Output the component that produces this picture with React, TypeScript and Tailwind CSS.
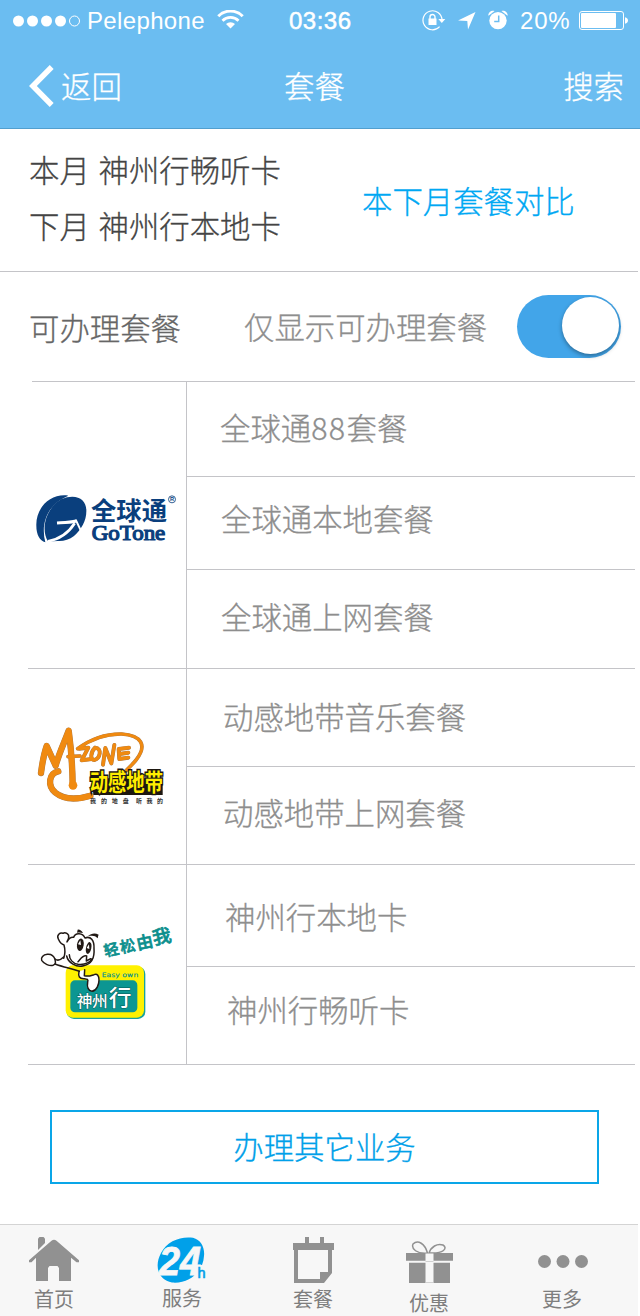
import React from "react";

const cjk = "font-['Noto_Sans_CJK_SC',sans-serif] font-light [-webkit-text-stroke:0.3px_currentColor]";
const cjkStack = "'Noto Sans CJK SC', sans-serif";

function StatusBar() {
  return (
    <div className="flex h-10 items-center pt-px pl-[13px] font-['Liberation_Sans',sans-serif] text-2xl leading-10 text-white">
      <svg width="68" height="12" viewBox="0 0 68 12" fill="#fff">
        <circle cx="5.5" cy="6" r="5.5" />
        <circle cx="19.5" cy="6" r="5.5" />
        <circle cx="33.5" cy="6" r="5.5" />
        <circle cx="47.5" cy="6" r="5.5" />
        <circle cx="61.5" cy="6" r="5" fill="none" stroke="#fff" strokeWidth="1" />
      </svg>
      <span className="ml-[6px] w-[130px] tracking-[0.35px]">Pelephone</span>
      <svg width="27" height="19" viewBox="0 0 27 19" fill="none" stroke="#fff" className="-mt-[3px]">
        <path d="M1.3 6.2a17.2 17.2 0 0 1 24.4 0" strokeWidth="3" />
        <path d="M5.5 10.7a11.3 11.3 0 0 1 16 0" strokeWidth="2.7" />
        <path d="M13.5 18.5 9 14.1a6.4 6.4 0 0 1 9 0z" fill="#fff" stroke="none" />
      </svg>
      <span className="ml-[45px] w-[133px] tracking-[0.5px] [-webkit-text-stroke:0.5px_#fff]">03:36</span>
      <svg width="24" height="22" viewBox="0 0 24 22" fill="none" stroke="#fff" className="-mt-[2px]">
        <path d="M17.6 17.6A9.5 9.5 0 1 1 20 11" strokeWidth="1.2" />
        <path d="M16.3 10h7l-3.5 4z" fill="#fff" stroke="none" />
        <path d="M6.5 9.5h8V16h-8z" fill="#fff" stroke="none" />
        <path d="M8 10V8a2.5 2.5 0 0 1 5 0v2" strokeWidth="1.4" />
      </svg>
      <svg width="18" height="18" viewBox="0 0 18 18" fill="#fff" className="ml-[12px]">
        <path d="M0 8.5 17.5 0 10 17.5 9.3 8.9z" />
      </svg>
      <svg width="20" height="20" viewBox="0 0 20 20" fill="#fff" className="ml-[12px] -mt-[2px]">
        <circle cx="10" cy="10.6" r="8.7" />
        <path d="M.5 5.8C-.5 2.8 3.5-.5 6.6 1zM19.5 5.8C20.5 2.8 16.5-.5 13.4 1z" />
        <path d="M10.7 5.5v6H6.2" fill="none" stroke="#6bbdf1" strokeWidth="1.5" />
      </svg>
      <span className="ml-[12px] w-[59px] tracking-[0.8px]">20%</span>
      <svg width="50" height="20" viewBox="0 0 50 20">
        <rect x=".5" y=".5" width="44" height="18" rx="2.5" fill="none" stroke="#fff" />
        <rect x="2" y="2" width="35" height="15" rx="1" fill="#fff" />
        <path d="M46 6.2c4 .8 4 5.8 0 6.6z" fill="#fff" />
      </svg>
    </div>
  );
}

function NavBar() {
  return (
    <div className={`${cjk} grid h-[88px] grid-cols-[284px_1fr_auto] pr-[16px] text-[30.4px] leading-[90px] text-white`}>
      <div className="flex pl-[29px]">
        <svg width="26" height="42" viewBox="0 0 26 42" fill="none" stroke="#fff" strokeWidth="5.5" className="mt-[25px]">
          <path d="M22.7 2 3.9 21l18.8 19" />
        </svg>
        <span className="ml-[6px]">返回</span>
      </div>
      <span>套餐</span>
      <span>搜索</span>
    </div>
  );
}

function GoToneLogo() {
  return (
    <svg width="158" height="80" viewBox="24 0 474 240" className="mt-[98px]">
      <path d="M145 47C95 39 47 80 49 137c0 27 10 44 27 50-14-53 3-112 69-140z" fill="#0a3f7d" />
      <path d="M84 184C60 145 80 84 123 58c44-18 75-2 76 32 1 32-14 57-37 78-14 11-32 16-48 15-10 0-20 1-30 1z" fill="#0a3f7d" />
      <g fill="none" stroke="#fff">
        <path d="M84 184C118 178 146 158 164 130" strokeWidth="8" />
        <path d="M111 129c18-1 38-1 58-6" strokeWidth="9" />
        <path d="M167 119l17 36" strokeWidth="6" />
      </g>
      <text x="213" y="120" fill="#0a3f7d" fontFamily={cjkStack} fontWeight="700" fontSize="76" textLength="228" lengthAdjust="spacingAndGlyphs">全球通</text>
      <text x="215" y="179" fill="#0a3f7d" stroke="#0a3f7d" strokeWidth="3.5" fontFamily="'Liberation Serif', serif" fontSize="62" textLength="221" lengthAdjust="spacingAndGlyphs">GoTone</text>
      <circle cx="456" cy="58" r="10.5" fill="none" stroke="#0a3f7d" strokeWidth="2.5" />
      <text x="450" y="64" fill="#0a3f7d" fontFamily="'Liberation Sans', sans-serif" fontWeight="700" fontSize="17">R</text>
    </svg>
  );
}

const mzoneStrokes = [
  { d: "M63 174c4-32 8-55 17-81l27 59c10-37 26-70 39-105 4 30 11 75 12 165", width: 17 },
  { d: "M144 125l36-2", width: 9 },
  { d: "M178 101l27-3-20 38 30-4", width: 10 },
  { d: "M225 98c-15 16-14 37-2 37 17-5 25-35 2-37", width: 10 },
  { d: "M249 149l7-50 18 46 9-55", width: 10 },
  { d: "M327 98l-31 4 2 30 27-4M299 117l26-4", width: 10 },
  { d: "M173 101C214 71 257 56 305 57c60 4 77 34 44 77-8 11-19 20-31 33", width: 9 },
  { d: "M115 169c-28 6-34 42-9 64 27 22 62 22 105 9", width: 17 },
];

function MZoneLogo() {
  return (
    <svg width="158" height="100" viewBox="24 0 474 300" className="mt-[46px]">
      <g fill="none" strokeLinecap="round" strokeLinejoin="round">
        {[
          { color: "#a8784a", extra: 2 },
          { color: "#f08a10", extra: 0 },
        ].map(({ color, extra }) => (
          <g key={color} stroke={color}>
            {mzoneStrokes.map(({ d, width }) => (
              <path key={d} d={d} strokeWidth={width + extra} />
            ))}
          </g>
        ))}
      </g>
      <circle cx="159" cy="211" r="13" fill="#f08a10" />
      <path d="M216 190h212v50H220z" fill="#1d1710" />
      <text x="209" y="229" fill="#ffed00" stroke="#1d1710" strokeWidth="9" paintOrder="stroke" fontFamily={cjkStack} fontWeight="700" fontSize="70" textLength="220" lengthAdjust="spacingAndGlyphs">动感地带</text>
      <g fill="#333" fontFamily={cjkStack} fontWeight="700" fontSize="18">
        <text x="210" y="265" textLength="116">我的地盘</text>
        <text x="348" y="265" textLength="81">听我的</text>
      </g>
    </svg>
  );
}

function EasyOwnLogo() {
  return (
    <svg width="158" height="120" viewBox="24 0 474 360" className="mt-[45px]">
      <rect x="140" y="170" width="236" height="157" rx="22" fill="#18a29b" />
      <rect x="137" y="166" width="235" height="157" rx="22" fill="#fff100" />
      <rect x="151" y="211" width="201" height="96" rx="14" fill="#0c9692" />
      <text x="245" y="201" fill="#13958a" fontFamily="'DejaVu Sans', sans-serif" fontSize="18" stroke="#13958a" strokeWidth=".9" textLength="110" lengthAdjust="spacingAndGlyphs">Easy own</text>
      <g fontFamily={cjkStack} fontWeight="500" fill="#fff" stroke="#075e5b" strokeWidth="3" paintOrder="stroke">
        <text x="170" y="291" fontSize="47" textLength="93">神州</text>
        <text x="266" y="288" fontSize="68">行</text>
      </g>
      <g fill="#0c8f8d" stroke="#0c8f8d" strokeWidth="2" fontFamily={cjkStack} fontWeight="500">
        <text transform="translate(256 140) rotate(-13)" fontSize="45">轻</text>
        <text transform="translate(304 130) rotate(-12)" fontSize="46">松</text>
        <text transform="translate(353 119) rotate(-12)" fontSize="50">由</text>
        <text transform="translate(402 105) rotate(-12)" fontSize="56">我</text>
      </g>
      <g fill="#fff" stroke="#211915" strokeWidth="4.5" strokeLinecap="round" strokeLinejoin="round">
        <path d="M177 184c-3 15 1 23 16 22 8 1 13 2 10 10-3 15 2 27 13 28 14-2 21-21 21-34 0-13-5-20-15-16-10 3-16 7-29 3l1-18" />
        <path d="M131 145c5-14 5-26 1-40-9-3-14-11-17-18-6-12 5-20 14-17 6-5 19 1 17 12 0 8-5 10-5 14C147 84 155 81 161 82c5-15 27-14 34 2 17-7 28 7 27 31 2 26-7 47-31 52-22 6-47-9-51-29" />
        <path d="M105 148c-3-9-12-16-23-15-13 1-20 10-17 18 7 11 24 18 34 15 9-3 8-8 6-18" />
        <path d="M105 147c10 8 19 1 26-6M105 162c25 9 45 13 73 22" fill="none" />
        <path d="M148 134c0 14 10 26 26 29 20 2 35-5 43-17M174 155c8-8 15-21 26-17l-1 15 13-7" fill="none" />
      </g>
      <ellipse cx="181" cy="104" rx="10" ry="19" fill="#211915" transform="rotate(8 181 104)" />
      <ellipse cx="206" cy="114" rx="8" ry="18" fill="#211915" transform="rotate(12 206 114)" />
      <path d="m181 91-7 12 9 2zM207 103l-7 11 8 3z" fill="#fff" />
      <path d="M173 59c6-1 12 3 16 10-7-2-12-2-18-1zM204 78c9-7 20-11 32-4-3 6-2 8-3 11-7-9-15-9-29-7z" fill="#211915" />
    </svg>
  );
}

const groups = [
  {
    Logo: GoToneLogo,
    rows: [
      { name: "全球通88套餐", box: "h-[94px] pb-[2px] pl-[33px]" },
      { name: "全球通本地套餐", box: "h-[92px] pb-[9px] pl-[34px]" },
      { name: "全球通上网套餐", box: "h-[98px] pb-[5px] pl-[34px]" },
    ],
  },
  {
    Logo: MZoneLogo,
    rows: [
      { name: "动感地带音乐套餐", box: "h-[97px] pb-[2px] pl-[36px]" },
      { name: "动感地带上网套餐", box: "h-[97px] pb-[6px] pl-[36px]" },
    ],
  },
  {
    Logo: EasyOwnLogo,
    rows: [
      { name: "神州行本地卡", box: "h-[101px] pt-[2px] pl-[38px]" },
      { name: "神州行畅听卡", box: "h-[97px] pb-[12px] pl-[40px]" },
    ],
  },
];

function PlanName({ name }: { name: string }) {
  return (
    <span>
      {name.split(/(\d+)/).map((part) =>
        /^\d+$/.test(part) ? (
          <span key={part} className="tracking-[1.4px]">{part}</span>
        ) : (
          part
        ),
      )}
    </span>
  );
}

function PlanTable() {
  return (
    <div className={`${cjk} ml-[28px] w-[607px] text-[30.4px] text-[#8e8e8e]`}>
      <div className="ml-[4px] h-px bg-[#c4c4c8]" />
      {groups.map(({ Logo, rows }) => (
        <div key={rows[0].name} className="flex border-b border-[#c4c4c8]">
          <div className="w-[158px] [-webkit-text-stroke:0]">
            <Logo />
          </div>
          <div className="flex-1 divide-y divide-[#c4c4c8] border-l border-[#c4c4c8]">
            {rows.map((row) => (
              <div key={row.name}>
                <div className={`${row.box} flex items-center`}>
                  <PlanName name={row.name} />
                </div>
              </div>
            ))}
          </div>
        </div>
      ))}
    </div>
  );
}

const tabs = [
  {
    label: "首页",
    box: "ml-[24px] pt-[12px]",
    text: "mt-[3px]",
    icon: (
      <svg width="60" height="46" viewBox="0 0 60 46" fill="#919191">
        <path d="M14 1.5 15.5 0h4L21 1.5V6l-7 7z" />
        <path d="M5 23.2 27.5 3.7q2.5-1.7 5 0L55 23.2v2h-2.5L47 20.8V44H35V31l-1.5-2h-8L24 31v13H12V20.8l-4.5 4.4H5z" />
      </svg>
    ),
  },
  {
    label: "服务",
    box: "ml-[68px] pt-[12px]",
    text: "mt-[2px]",
    icon: (
      <svg width="60" height="46" viewBox="0 0 60 46">
        <path d="M9 16C15 4 29-1 41 .8c8 2 12 10 11 18.2C51 36 36 47 20 45.5 6 43 2 29 9 16z" fill="#00a0e9" />
        <path d="M43 28h11v17H42z" fill="#f7f7f7" />
        <text x="7" y="38" fontFamily="'Liberation Sans', sans-serif" fontWeight="700" fontStyle="italic" fontSize="41" fill="#f7f7f7" stroke="#f7f7f7" strokeWidth=".8" textLength="42" lengthAdjust="spacingAndGlyphs">24</text>
        <text x="45.5" y="41" fontFamily="'Liberation Sans', sans-serif" fontSize="14.5" fill="#00a0e9" stroke="#00a0e9" strokeWidth=".6">h</text>
      </svg>
    ),
  },
  {
    label: "套餐",
    box: "ml-[71px] pt-[12px]",
    text: "mt-[3px]",
    icon: (
      <svg width="60" height="46" viewBox="0 0 60 46" fill="#919191">
        <path fillRule="evenodd" d="M10 6h12V0h4v6h11V0h4v6h10v7h-2v23l-8 10H11V13h-1zM15 13v29h22v-7h8V13z" />
      </svg>
    ),
  },
  {
    label: "优惠",
    box: "ml-[56px] pt-[16px]",
    text: "mt-[3px]",
    icon: (
      <svg width="60" height="46" viewBox="0 0 60 46">
        <g fill="none" stroke="#919191" strokeWidth="1.5">
          <path d="M28.5 12C18 13 12 8 14 3c5-5 12 0 14.5 9z" />
          <path d="M30 12C32 6 38 2 44 4c5 3 1 9-14 8z" />
        </g>
        <path d="M7 12h47v8H7zM10 21.500h41V42H10z" fill="#919191" />
        <path d="M26.5 12.500h8v29.500h-8zM7 19.800h47v1.600H7z" fill="#f7f7f7" />
        <path d="M26.5 41.200h8v.8h-8zM26.5 20.200h8v.8h-8z" fill="#c5c5c5" />
      </svg>
    ),
  },
  {
    label: "更多",
    box: "ml-[73px] pt-[12px]",
    text: "mt-[3px]",
    icon: (
      <svg width="60" height="46" viewBox="0 0 60 46" fill="#919191">
        <circle cx="12.5" cy="24.5" r="6.5" />
        <circle cx="31" cy="24.5" r="6.5" />
        <circle cx="49.5" cy="24.5" r="6.5" />
      </svg>
    ),
  },
];

function TabBar() {
  return (
    <div className="flex h-[92px] w-[638px] overflow-hidden border-t border-[#d4d4d4] bg-[#f7f7f7]">
      {tabs.map((tab) => (
        <div key={tab.label} className={`${tab.box} flex w-[60px] flex-col items-center [&>*]:shrink-0`}>
          {tab.icon}
          <span className={`${tab.text} font-['Noto_Sans_CJK_SC',sans-serif] text-[20px] leading-[26px] text-[#7e7e7e]`}>{tab.label}</span>
        </div>
      ))}
    </div>
  );
}

export default function App() {
  return (
    <div className="h-[1316px] w-[640px] overflow-hidden bg-white">
      <header className="border-b border-[#519fcf] bg-[#6bbdf1]">
        <StatusBar />
        <NavBar />
      </header>

      <section className={`${cjk} flex h-[143px] w-[638px] border-b border-[#c4c4c8] pl-[29px] text-[30.4px]`}>
        <div className="w-[333px] pt-[12px] leading-[56px] [word-spacing:2px] text-[#444]">
          <p>本月 神州行畅听卡</p>
          <p>下月 神州行本地卡</p>
        </div>
        <p className="pt-[43px] leading-[56px] text-[#00a8f3]">本下月套餐对比</p>
      </section>

      <section className={`${cjk} flex h-[109px] items-start pl-[29px] text-[30.4px] leading-[56px]`}>
        <p className="w-[215px] pt-[27px] text-[#666]">可办理套餐</p>
        <p className="w-[273px] pt-[26px] text-[#8e8e8e]">仅显示可办理套餐</p>
        <div className="mt-[23px] flex h-[63px] w-[104px] justify-end rounded-full bg-[#42a5e9] pt-[2px] pr-[2px]">
          <div className="size-[57px] rounded-full bg-white shadow-[0_2px_4px_rgba(0,0,0,0.35)]" />
        </div>
      </section>

      <PlanTable />

      <button className={`${cjk} mt-[45px] mb-[40px] ml-[50px] flex h-[74px] w-[549px] items-center justify-center border-2 border-[#0aa6e8] text-[30.4px] text-[#00a0e9]`}>
        办理其它业务
      </button>

      <TabBar />
    </div>
  );
}
